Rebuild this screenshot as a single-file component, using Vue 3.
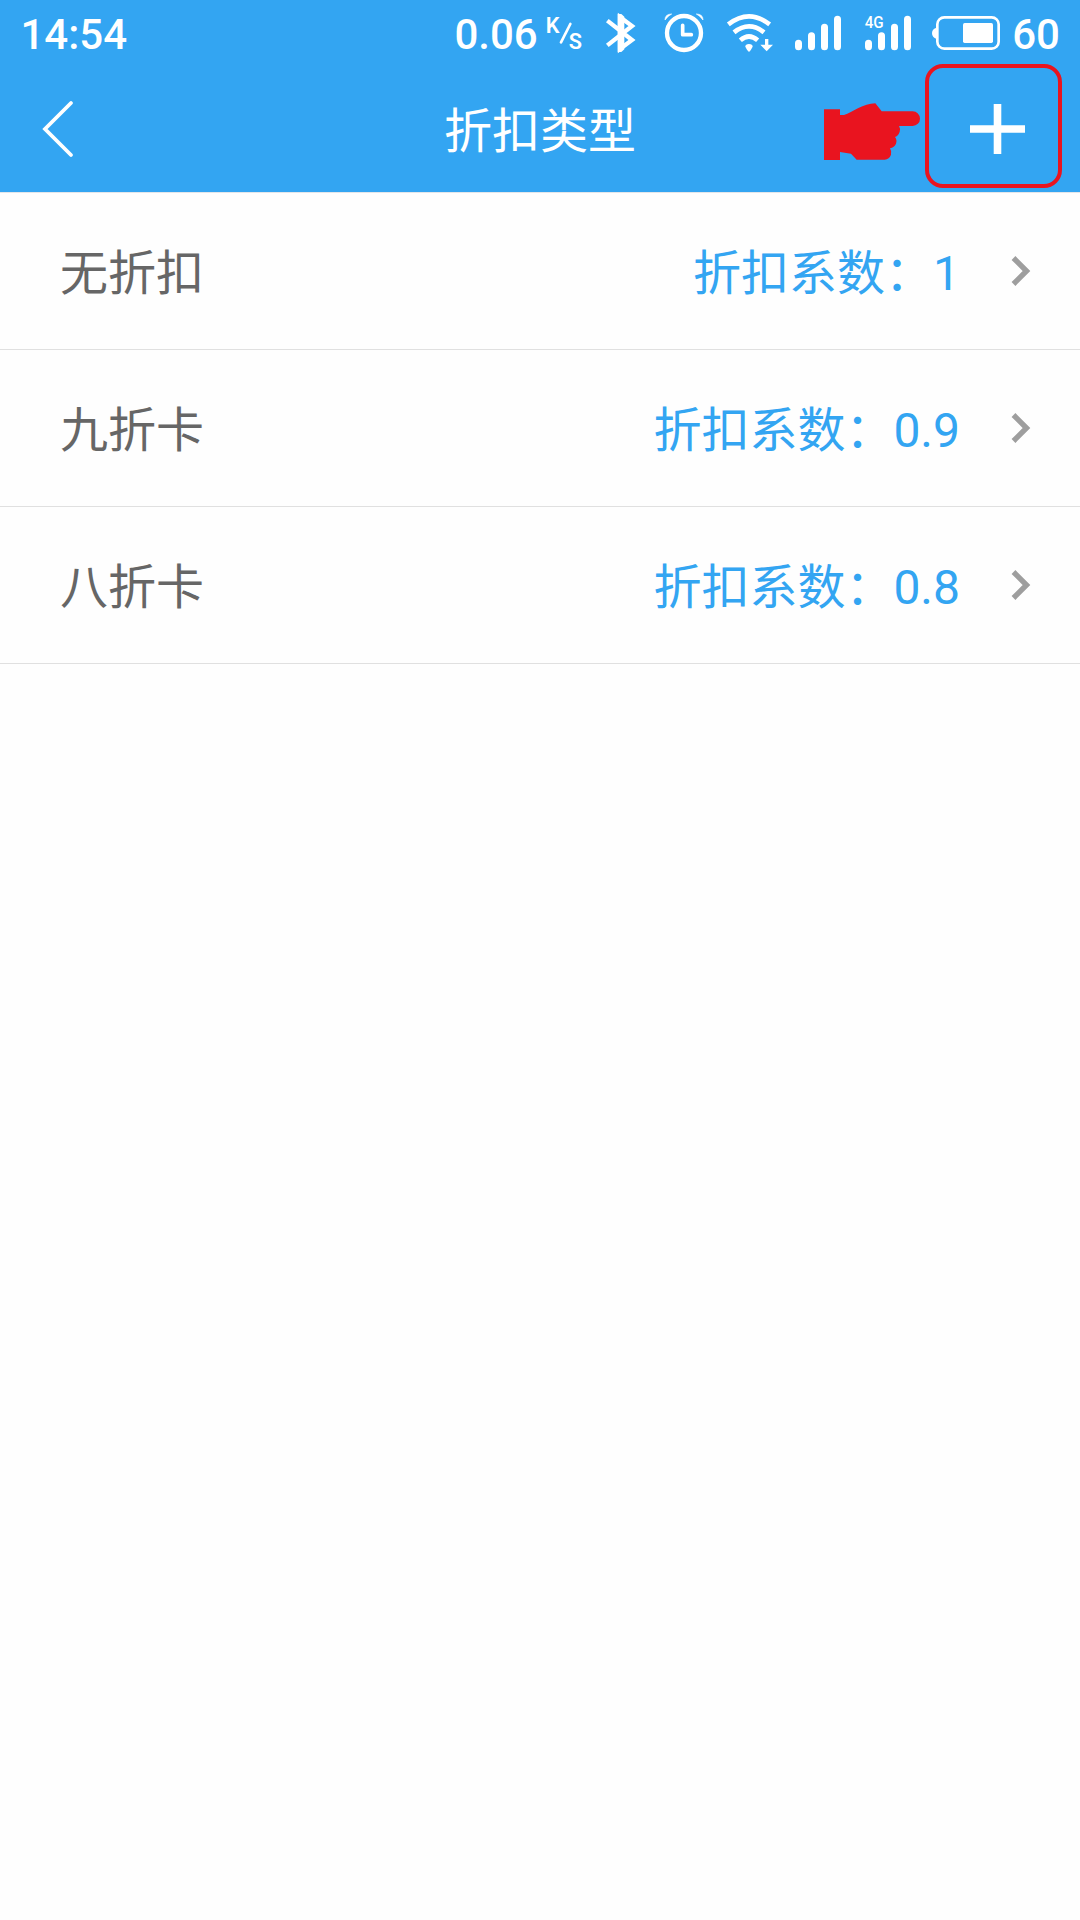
<template>
  <div class="screen">
    <header class="header">
      <!-- Status bar -->
      <div class="status-bar">
        <span class="clock">14:54</span>
        <div class="status-right">
          <span class="speed">0.06</span>
          <svg class="icon speed-unit" viewBox="345 39 117 120">
            <text x="347" y="98" font-size="65" font-weight="600">K</text>
            <path d="M421 72L393 127" stroke="#fff" stroke-width="8" stroke-linecap="round" />
            <text x="416" y="146" font-size="65" font-weight="600">S</text>
          </svg>
          <svg class="icon bluetooth" viewBox="525 39 93 120">
            <path d="M532 62L606 120L570 147V51L606 78L532 136" fill="none" stroke="#fff" stroke-width="13" />
            <path d="M563 42H574L583 50V148L574 156H563Z" fill="#fff" />
          </svg>
          <svg class="icon alarm" viewBox="702 39 120 120">
            <circle cx="762" cy="99" r="51" fill="none" stroke="#fff" stroke-width="13" />
            <path d="M758 76V104H784" fill="none" stroke="#fff" stroke-width="11" stroke-linecap="round" stroke-linejoin="round" />
            <path d="M705 60Q705 42 725 42Q714 47 705 60ZM819 60Q819 42 799 42Q810 47 819 60Z" fill="#fff" stroke="#fff" stroke-width="2" />
          </svg>
          <svg class="icon wifi" viewBox="18 39 144 120">
            <g fill="none" stroke="#fff" stroke-width="14">
              <path d="M25 73Q87 25 149 73" />
              <path d="M42 97Q87 61 132 97" />
              <path d="M61 121Q87 98 113 121" />
            </g>
            <path d="M76 140Q76 132 87 132Q98 132 98 140Q94 149 87 156Q80 149 76 140Z" fill="#fff" />
            <path d="M135 117H145V134H159L140 154L121 134H135Z" fill="#fff" />
          </svg>
          <svg class="icon signal" viewBox="222 39 144 120">
            <path :d="signalBars" fill="none" stroke="#fff" stroke-width="21" stroke-linecap="round" />
          </svg>
          <svg class="icon signal-4g" viewBox="432 39 144 120">
            <text x="434" y="84" font-size="49" textLength="57" lengthAdjust="spacingAndGlyphs">4G</text>
            <path :d="signalBars" transform="translate(210 0)" fill="none" stroke="#fff" stroke-width="21" stroke-linecap="round" />
          </svg>
          <svg class="icon battery" viewBox="633 39 210 120">
            <rect x="652" y="52" width="184" height="94" rx="21" fill="none" stroke="#fff" stroke-width="8" />
            <path d="M650 83Q636 87 636 99Q636 113 650 117Z" fill="#fff" />
            <rect x="729" y="69" width="90" height="60" rx="5" fill="#fff" />
          </svg>
          <span class="percent">60</span>
        </div>
      </div>

      <!-- Title bar -->
      <div class="nav-bar">
        <button class="nav-btn back" aria-label="返回">
          <svg width="36" height="60" viewBox="0 0 36 60">
            <path d="M30 4L4 30L30 56" fill="none" stroke="#fff" stroke-width="3.800" stroke-linecap="round" />
          </svg>
        </button>
        <h1 class="title">折扣类型</h1>
        <button class="nav-btn add" aria-label="添加">
          <svg width="55" height="50" viewBox="0 0 55 50">
            <path d="M0 25H55M27.500 0V50" stroke="#fff" stroke-width="7.600" />
          </svg>
        </button>
      </div>

      <!-- Hint over the add button -->
      <svg class="hand" viewBox="72 156 288 174">
        <path
          d="M72 178H120V195H132C158 187 190 160 226 160L245 184H338A22 22 0 0 1 338 228H297Q302 236 299 245Q296 257 285 261Q292 270 288 281Q283 292 270 295Q276 304 273 314Q268 328 254 329H170L153 311L120 306V330H72Z"
          fill="#e9141f"
        />
      </svg>
      <div class="highlight"></div>
    </header>

    <ul class="list">
      <li v-for="item in discounts" :key="item.name" class="row">
        <span class="name">{{ item.name }}</span>
        <span class="rate">折扣系数：{{ item.rate }}</span>
        <svg class="arrow" width="20" height="32" viewBox="0 0 20 32">
          <path d="M2.500 3L15.500 16L2.500 29" fill="none" stroke="#9e9e9e" stroke-width="5.400" />
        </svg>
      </li>
    </ul>
  </div>
</template>

<script setup>
import { ref } from 'vue';

const discounts = ref([
  { name: '无折扣', rate: '1' },
  { name: '九折卡', rate: '0.9' },
  { name: '八折卡', rate: '0.8' }
]);

const signalBars = 'M235.500 130V140M274.500 107V140M313.500 82V140M352.500 58V140';
</script>

<style>
body {
  margin: 0;
  background: #fefefe;
}
</style>

<style scoped>
.screen {
  min-height: 1920px;
  background: #fefefe;
  font-family: Roboto, 'Noto Sans CJK SC', sans-serif;
}

.header {
  position: relative;
  height: 192px;
  background: #33a5f2;
  border-bottom: 1px solid #e3e6ea;
  color: #fff;
}

/* Status bar */
.status-bar {
  display: flex;
  justify-content: space-between;
  align-items: center;
  box-sizing: border-box;
  height: 66px;
  padding: 0 20px 0 20.5px;
  font-size: 42px;
  font-weight: 500;
  line-height: 66px;
}

.clock,
.speed,
.percent {
  padding-top: 3px;
  line-height: 63px;
}

.status-right {
  display: flex;
  align-items: center;
}

.icon {
  height: 40px;
  flex: none;
  fill: #fff;
  overflow: visible;
}

.speed-unit {
  width: 39px;
  margin-left: 7.5px;
}

.bluetooth {
  width: 31px;
  margin-left: 21px;
}

.alarm {
  width: 40px;
  margin-left: 28px;
}

.wifi {
  width: 48px;
  margin-left: 22px;
}

.signal {
  width: 48px;
  margin-left: 20px;
}

.signal-4g {
  width: 48px;
  margin-left: 22px;
}

.battery {
  width: 70px;
  margin-left: 19px;
}

.percent {
  margin-left: 11px;
}

/* Title bar */
.nav-bar {
  display: grid;
  grid-template-columns: 160px 1fr 160px;
  align-items: center;
  height: 126px;
}

.nav-btn {
  display: flex;
  align-items: center;
  height: 100%;
  padding: 0;
  border: none;
  background: none;
}

.back {
  padding-left: 41px;
}

.add {
  justify-content: flex-end;
  padding-right: 55px;
}

.title {
  margin: 0;
  padding-top: 5px;
  font-size: 48px;
  font-weight: 400;
  line-height: 72px;
  text-align: center;
}

.hand {
  position: absolute;
  left: 824px;
  top: 102px;
  width: 96px;
  height: 58px;
}

.highlight {
  position: absolute;
  left: 925px;
  top: 64px;
  box-sizing: border-box;
  width: 137px;
  height: 124px;
  border: 4px solid #e9141f;
  border-radius: 18px;
}

/* List */
.list {
  margin: 0;
  padding: 0;
  list-style: none;
}

.row {
  display: flex;
  align-items: center;
  box-sizing: border-box;
  height: 157px;
  padding: 0 49px 0 60px;
  border-bottom: 1px solid #e0e0e0;
  font-size: 48px;
  line-height: 72px;
}

.name {
  flex: 1;
  padding-top: 5px;
  color: #666;
}

.rate {
  padding-top: 5px;
  color: #33a5f2;
}

.arrow {
  margin-left: 51px;
}
</style>
